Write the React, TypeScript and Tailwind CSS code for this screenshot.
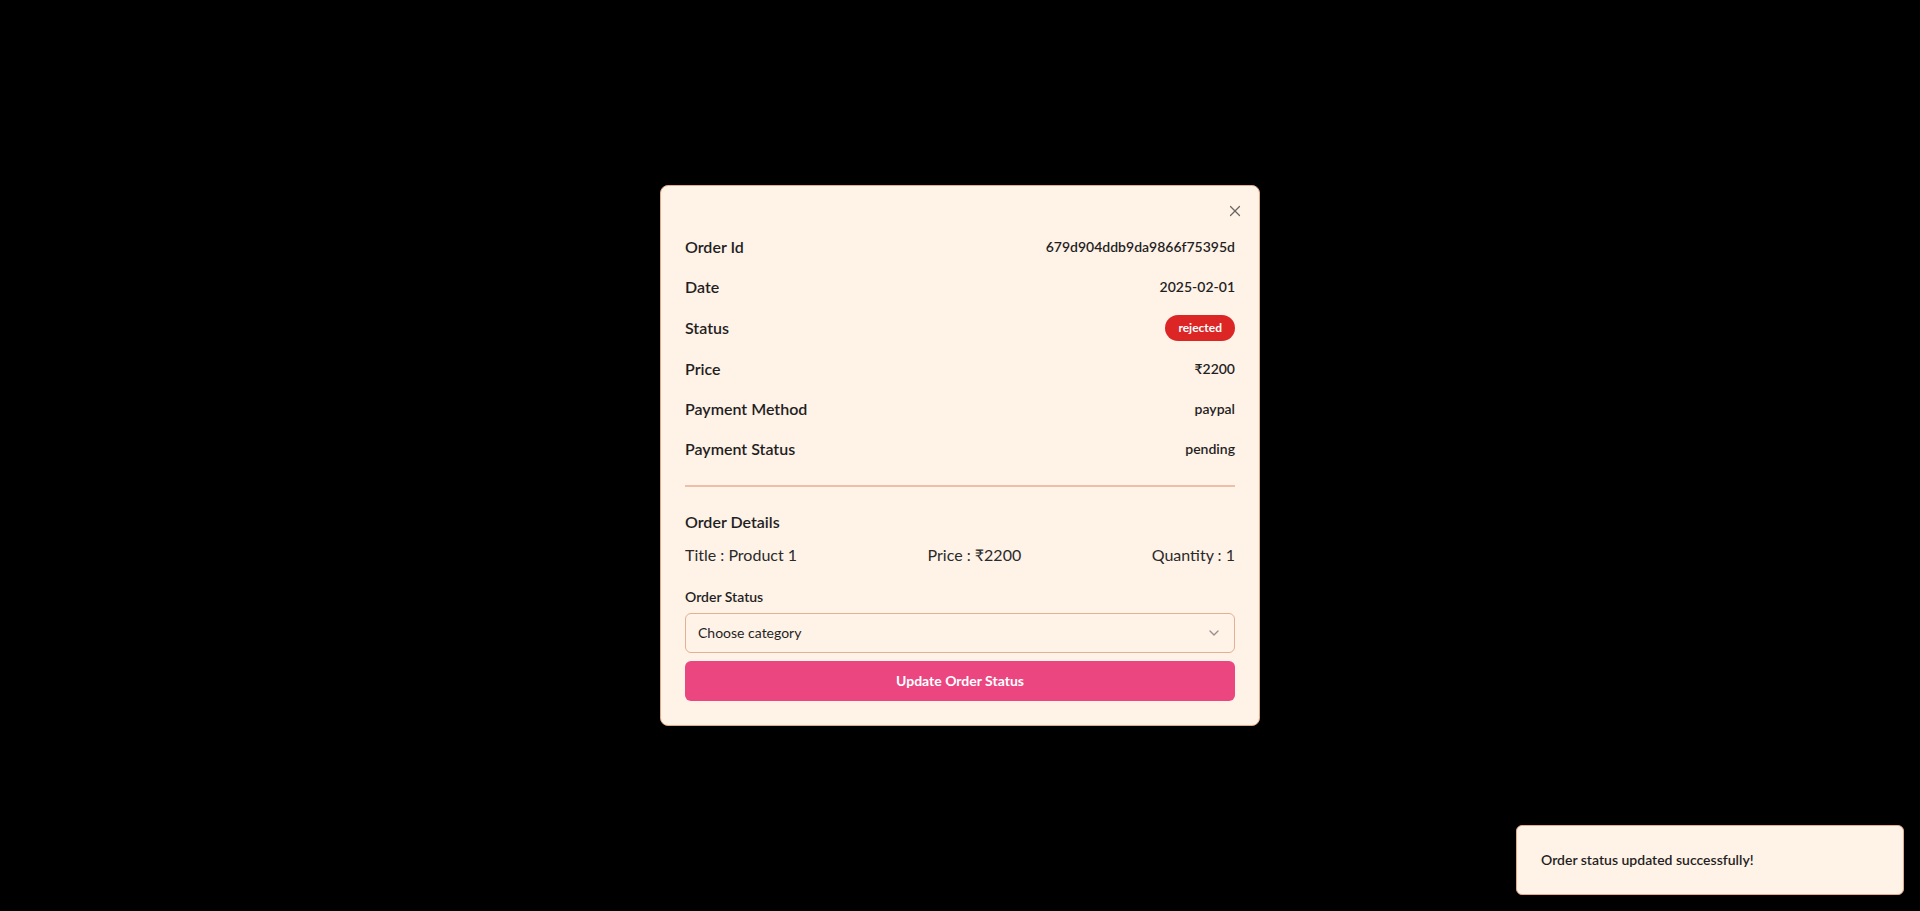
import { X, ChevronDown } from "lucide-react";

const rows = [
  { label: "Order Id", value: "679d904ddb9da9866f75395d" },
  { label: "Date", value: "2025-02-01" },
  { label: "Status", value: "rejected", badge: true },
  { label: "Price", value: "₹2200" },
  { label: "Payment Method", value: "paypal" },
  { label: "Payment Status", value: "pending" },
];

export default function App() {
  return (
    <div
      className="relative min-h-screen w-full bg-black flex items-center justify-center text-[#1f1f1f]"
      style={{ fontFamily: "Lato, 'Noto Sans', sans-serif" }}
    >
      {/* DIALOG */}
      <div className="relative w-[600px] rounded-lg border border-[#e6a988] bg-[#fff2e7] p-6">
        <button className="absolute right-[15px] top-4 text-[#444] opacity-80">
          <X size={18} strokeWidth={1.6} />
        </button>

        <div className="mt-[25px] flex flex-col gap-4">
          {rows.map((r) => (
            <div key={r.label} className="flex items-center justify-between">
              <span className="text-base leading-6 font-semibold">{r.label}</span>
              {r.badge ? (
                <span className="rounded-full border border-transparent bg-[#dc2626] px-3 py-1 text-xs font-bold text-white">
                  {r.value}
                </span>
              ) : (
                <span className="text-sm font-semibold">{r.value}</span>
              )}
            </div>
          ))}
        </div>

        <div className="mt-6 h-[2px] bg-[#ebbfa8]" />

        {/* ORDER DETAILS */}
        <div className="mt-[23px] text-base leading-6 font-semibold">Order Details</div>
        <div className="mt-[9px] flex items-center justify-between text-base leading-6 text-[#2a2a2a]">
          <span>Title : Product 1</span>
          <span>Price : ₹2200</span>
          <span>Quantity : 1</span>
        </div>

        {/* FORM */}
        <div className="mt-5 text-sm leading-5 font-semibold">Order Status</div>
        <div className="mt-[6px] flex h-10 items-center justify-between rounded-md border border-[#e2b094] px-3 text-sm">
          <span>Choose category</span>
          <ChevronDown size={16} className="text-[#333] opacity-50" />
        </div>
        <button className="mt-2 flex h-10 w-full items-center justify-center rounded-md bg-[#ec4680] text-sm font-bold text-white">
          Update Order Status
        </button>
      </div>

      {/* TOAST */}
      <div className="fixed bottom-0 right-0 w-[420px] p-4">
        <div className="rounded-md border border-[#e6a988] bg-[#fff2e7] p-6 pr-8">
          <div className="text-sm leading-5 font-semibold">Order status updated successfully!</div>
        </div>
      </div>
    </div>
  );
}
